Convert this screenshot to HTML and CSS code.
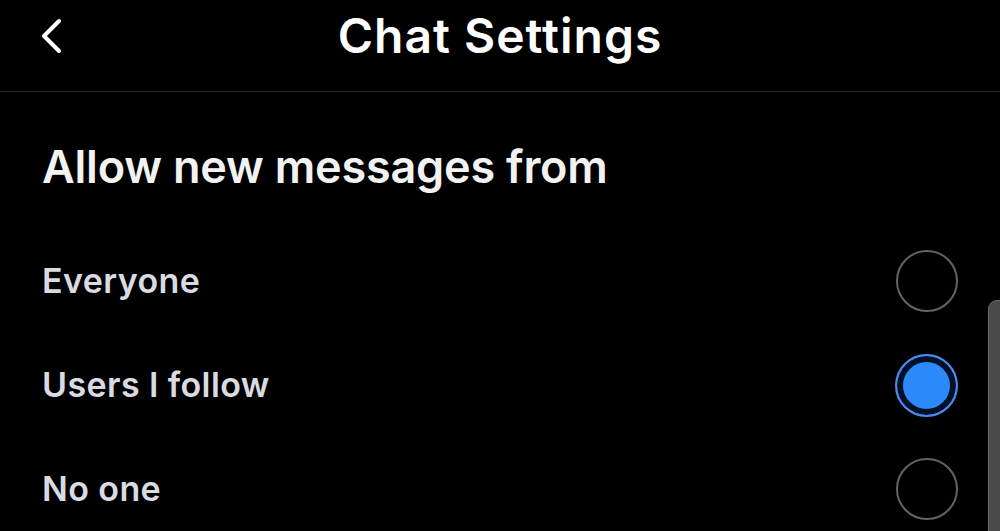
FILE: index.html
```html
<!DOCTYPE html>
<html>
  <head>
    <title>Chat Settings</title>
    <meta name="viewport" content="width=device-width, initial-scale=1.0" />
    <link rel="stylesheet" href="styles.css">
  </head>
  <body>
    <header class="topbar">
      <button class="back-btn" aria-label="Back">
        <svg width="24" height="36" viewBox="0 0 24 36">
          <path d="M19 3 L4 18 L19 33" fill="none" stroke="#fff" stroke-width="4" stroke-linecap="round" stroke-linejoin="round" />
        </svg>
      </button>
      <h1 class="title">Chat Settings</h1>
    </header>

    <main class="content">
      <h2 class="section-title">Allow new messages from</h2>

      <ul class="options">
        <li class="option">
          <span class="option-label">Everyone</span>
          <span class="radio"></span>
        </li>
        <li class="option">
          <span class="option-label">Users I follow</span>
          <span class="radio checked"></span>
        </li>
        <li class="option">
          <span class="option-label">No one</span>
          <span class="radio"></span>
        </li>
      </ul>
    </main>

    <div class="scrollbar"></div>
  </body>
</html>
```

FILE: styles.css
```css
/* Base styles */
body {
  font-family: Inter, "Noto Sans", sans-serif;
  background: #000;
  color: #fff;
  margin: 0;
  padding: 0;
  overflow: hidden;
}

/* Top bar */
.topbar {
  position: relative;
  height: 92px;
  display: flex;
  align-items: center;
  justify-content: center;
  padding-bottom: 19px;
  box-sizing: border-box;
  border-bottom: 1px solid #262626;
}

.back-btn {
  position: absolute;
  left: 40px;
  top: 18px;
  background: none;
  border: none;
  padding: 0;
  cursor: pointer;
}

.title {
  margin: 0;
  font-size: 48px;
  font-weight: 600;
  line-height: 1;
  letter-spacing: 1px;
}

/* Settings list */
.content {
  padding: 0 42px 0 42px;
}

.section-title {
  margin: 52px 0 0;
  font-size: 45px;
  font-weight: 600;
  line-height: 1;
  letter-spacing: -0.2px;
  color: #f2f2f2;
}

.options {
  list-style-type: none;
  margin: 40px 0 0;
  padding: 0;
}

.option {
  height: 104px;
  display: flex;
  align-items: center;
  justify-content: space-between;
}

.option-label {
  font-size: 34px;
  font-weight: 600;
  line-height: 1;
  letter-spacing: 0.4px;
  color: #d9dbe0;
}

.radio {
  width: 58px;
  height: 58px;
  border: 2px solid #5f636b;
  border-radius: 50%;
}

.radio.checked {
  border-color: #4a8ce8;
  background: #2c8af8;
  box-shadow: inset 0 0 0 6px #01102a;
  width: 59px;
  height: 59px;
}

.scrollbar {
  position: absolute;
  right: -8px;
  top: 300px;
  width: 18px;
  height: 260px;
  background: #4a4a4a;
  border: 1px solid #6a6a6a;
  border-radius: 9px;
}
```
